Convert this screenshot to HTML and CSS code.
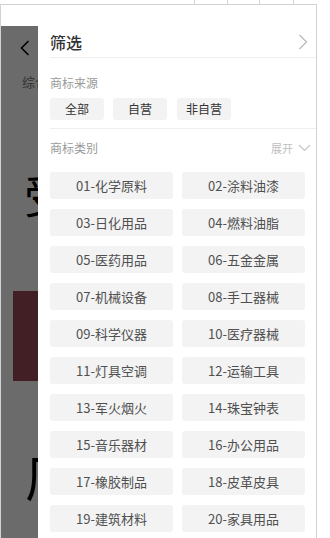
FILE: index.html
```html
<!DOCTYPE html>
<html lang="zh-CN">
<head>
<meta charset="utf-8">
<title>筛选</title>
<link rel="stylesheet" href="styles.css">
</head>
<body>
<div class="ticks">
  <div class="tick-spacer"></div>
  <div class="tick tick-a"></div>
  <div class="tick tick-b"></div>
  <div class="tick tick-c"></div>
  <div class="tick tick-d"></div>
</div>
<div class="frame">
  <div class="status"></div>
  <div class="page">
    <div class="under">
      <div class="u-head">
        <svg class="u-back" width="10" height="16" viewBox="0 0 10 16"><polyline points="8.5,1 1.5,8 8.5,15" fill="none" stroke="#000" stroke-width="1.6"/></svg>
      </div>
      <div class="u-tabs">综合</div>
      <div class="u-big1">受</div>
      <div class="u-block"></div>
      <div class="u-big2">厂</div>
      <div class="mask"></div>
    </div>
    <aside class="drawer">
      <div class="d-head">
        <span class="d-title">筛选</span>
        <svg class="d-close" width="10" height="16" viewBox="0 0 10 16"><polyline points="1.5,1 8.5,8 1.5,15" fill="none" stroke="#b8b8b8" stroke-width="1.2"/></svg>
      </div>
      <section class="sec sec-source">
        <div class="label">商标来源</div>
        <div class="chips">
          <span class="chip">全部</span>
          <span class="chip">自营</span>
          <span class="chip chip-3">非自营</span>
        </div>
      </section>
      <section class="sec sec-cat">
        <div class="label-row">
          <span class="label">商标类别</span>
          <span class="expand">展开
            <svg width="13" height="8" viewBox="0 0 13 8"><polyline points="1,1 6.5,6.5 12,1" fill="none" stroke="#c4c4c4" stroke-width="1.1"/></svg>
          </span>
        </div>
        <div class="grid">
          <div class="tile">01-化学原料</div>
          <div class="tile">02-涂料油漆</div>
          <div class="tile">03-日化用品</div>
          <div class="tile">04-燃料油脂</div>
          <div class="tile">05-医药用品</div>
          <div class="tile">06-五金金属</div>
          <div class="tile">07-机械设备</div>
          <div class="tile">08-手工器械</div>
          <div class="tile">09-科学仪器</div>
          <div class="tile">10-医疗器械</div>
          <div class="tile">11-灯具空调</div>
          <div class="tile">12-运输工具</div>
          <div class="tile">13-军火烟火</div>
          <div class="tile">14-珠宝钟表</div>
          <div class="tile">15-音乐器材</div>
          <div class="tile">16-办公用品</div>
          <div class="tile">17-橡胶制品</div>
          <div class="tile">18-皮革皮具</div>
          <div class="tile">19-建筑材料</div>
          <div class="tile">20-家具用品</div>
        </div>
      </section>
    </aside>
  </div>
</div>
</body>
</html>
```
FILE: styles.css
```css
* { box-sizing: border-box; }
html, body { margin: 0; padding: 0; background: #fff; }
body {
  width: 330px;
  height: 538px;
  overflow: hidden;
  font-family: "Noto Sans CJK SC", "Noto Sans", sans-serif;
}
.ticks { display: flex; height: 4px; }
.tick-spacer { width: 194px; }
.tick { border-left: 1px solid #d4d4d4; }
.tick-a { width: 33px; }
.tick-b { width: 32px; }
.tick-c { width: 34px; }
.tick-d { width: 30px; }

.frame {
  width: 317px;
  height: 534px;
  border: 1px solid #d2d2d2;
  border-bottom: none;
  display: flex;
  flex-direction: column;
}
.status { height: 21px; flex: none; }
.page { flex: 1; display: flex; overflow: hidden; background: #fff; }

.under {
  position: relative;
  width: 37px;
  flex: none;
  overflow: hidden;
  background: #fff;
}
.u-head { height: 44px; display: flex; align-items: center; padding-left: 19px; }
.u-back { display: block; }
.u-tabs {
  margin-top: 2px;
  padding-left: 21px;
  font-size: 13px;
  line-height: 20px;
  color: #777;
  white-space: nowrap;
}
.u-big1 {
  margin-top: 76px;
  padding-left: 23px;
  font-size: 46px;
  line-height: 50px;
  color: #000;
  white-space: nowrap;
}
.u-block {
  margin-top: 73px;
  margin-left: 12px;
  width: 60px;
  height: 90px;
  background: #9c4a57;
}
.u-big2 {
  margin-top: 66px;
  padding-left: 24px;
  font-size: 50px;
  line-height: 56px;
  color: #000;
  white-space: nowrap;
}
.mask { position: absolute; inset: 0; background: rgba(0,0,0,0.58); }

.drawer {
  flex: 1;
  background: #fff;
  padding-left: 12px;
}
.d-head {
  height: 32px;
  display: flex;
  align-items: center;
  justify-content: space-between;
  padding-right: 8px;
  border-bottom: 1px solid #efefef;
}
.d-title { font-size: 16px; font-weight: 500; color: #333; line-height: 20px; }
.d-close { display: block; }

.sec { border-bottom: 1px solid #efefef; }
.sec-source { padding: 18px 0 8px; }
.label { font-size: 12px; line-height: 14px; color: #9a9a9a; }
.chips { display: flex; gap: 9px; margin-top: 8px; }
.chip {
  min-width: 54px;
  height: 22px;
  padding: 0 8px;
  border-radius: 3px;
  background: #f3f3f3;
  font-size: 12px;
  line-height: 22px;
  color: #333;
  text-align: center;
}
.chip-3 { margin-left: 1px; }

.sec-cat { border-bottom: none; padding-top: 12px; padding-right: 11px; }
.label-row { display: flex; align-items: center; justify-content: space-between; }
.expand {
  display: flex;
  align-items: center;
  gap: 5px;
  font-size: 11px;
  line-height: 14px;
  color: #c0c0c0;
  margin-right: -6px;
}
.expand svg { display: block; }
.grid {
  margin-top: 17px;
  display: grid;
  grid-template-columns: 123px 123px;
  column-gap: 9px;
  row-gap: 10px;
}
.tile {
  height: 27px;
  border-radius: 3px;
  background: #f3f3f3;
  font-size: 13px;
  line-height: 27px;
  color: #505050;
  text-align: center;
  white-space: nowrap;
}
```
